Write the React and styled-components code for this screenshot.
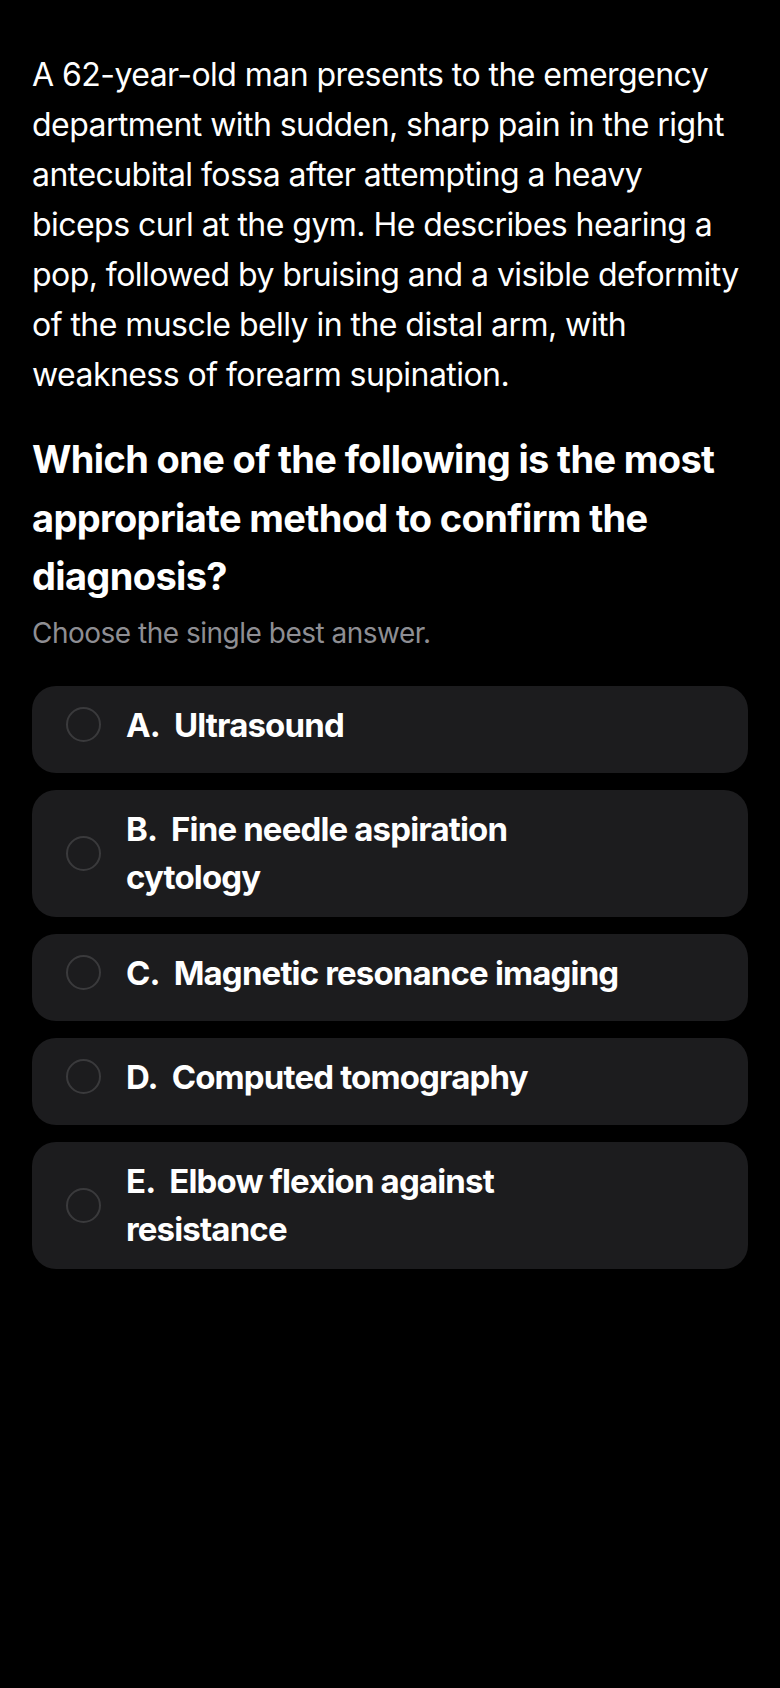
import React from "react";
import styled, { createGlobalStyle } from "styled-components";

const GlobalStyle = createGlobalStyle`
  html, body {
    margin: 0;
    padding: 0;
    background: #000000;
  }
  body {
    font-family: Inter, "Noto Sans", "Liberation Sans", sans-serif;
    color: #ffffff;
    -webkit-font-smoothing: antialiased;
  }
  * { box-sizing: border-box; }
`;

const Page = styled.main`
  min-height: 1688px;
  background: #000000;
  padding: 50px 32px 40px;
  display: flex;
  flex-direction: column;
`;

const Stem = styled.p`
  margin: 0;
  max-width: 710px;
  font-size: 32px;
  line-height: 50px;
  font-weight: 400;
  letter-spacing: -0.55px;
  color: #ffffff;
`;

const Question = styled.h2`
  margin: 30px 0 0;
  font-size: 38px;
  line-height: 58.5px;
  font-weight: 700;
  letter-spacing: -0.65px;
  color: #ffffff;
`;

const Hint = styled.p`
  margin: 7px 0 0;
  font-size: 28px;
  line-height: 40px;
  font-weight: 400;
  letter-spacing: -0.5px;
  color: #8e8e93;
`;

const OptionList = styled.div`
  margin-top: 33px;
  display: flex;
  flex-direction: column;
  gap: 17px;
`;

const OptionCard = styled.button`
  appearance: none;
  border: none;
  margin: 0;
  width: 100%;
  min-height: 87px;
  padding: 15px 24px 15px 34px;
  background: #1c1c1e;
  border-radius: 24px;
  display: flex;
  flex-direction: column;
  justify-content: flex-start;
  align-items: stretch;
  text-align: left;
  cursor: pointer;
  font: inherit;
  color: inherit;
`;

const OptionRow = styled.span`
  display: flex;
  align-items: center;
  gap: 25px;
`;

const Radio = styled.span`
  flex: 0 0 35px;
  width: 35px;
  height: 35px;
  border-radius: 50%;
  border: 2.5px solid #3a3a3c;
`;

const OptionLabel = styled.span`
  flex: 0 1 auto;
  max-width: 502px;
  font-size: 33px;
  line-height: 48.5px;
  font-weight: 700;
  letter-spacing: -0.85px;
  color: #ffffff;
`;

const options = [
  { letter: "A", text: "Ultrasound" },
  { letter: "B", text: "Fine needle aspiration cytology" },
  { letter: "C", text: "Magnetic resonance imaging" },
  { letter: "D", text: "Computed tomography" },
  { letter: "E", text: "Elbow flexion against resistance" },
];

export default function App() {
  return (
    <>
      <GlobalStyle />
      <Page>
        <Stem>
          A 62-year-old man presents to the emergency department with sudden,
          sharp pain in the right antecubital fossa after attempting a heavy
          biceps curl at the gym. He describes hearing a pop, followed by
          bruising and a visible deformity of the muscle belly in the distal
          arm, with weakness of forearm supination.
        </Stem>
        <Question>
          Which one of the following is the most appropriate method to confirm
          the diagnosis?
        </Question>
        <Hint>Choose the single best answer.</Hint>
        <OptionList>
          {options.map((o) => (
            <OptionCard key={o.letter} type="button">
              <OptionRow>
                <Radio />
                <OptionLabel>
                  {o.letter}.{"\u00a0"} {o.text}
                </OptionLabel>
              </OptionRow>
            </OptionCard>
          ))}
        </OptionList>
      </Page>
    </>
  );
}
